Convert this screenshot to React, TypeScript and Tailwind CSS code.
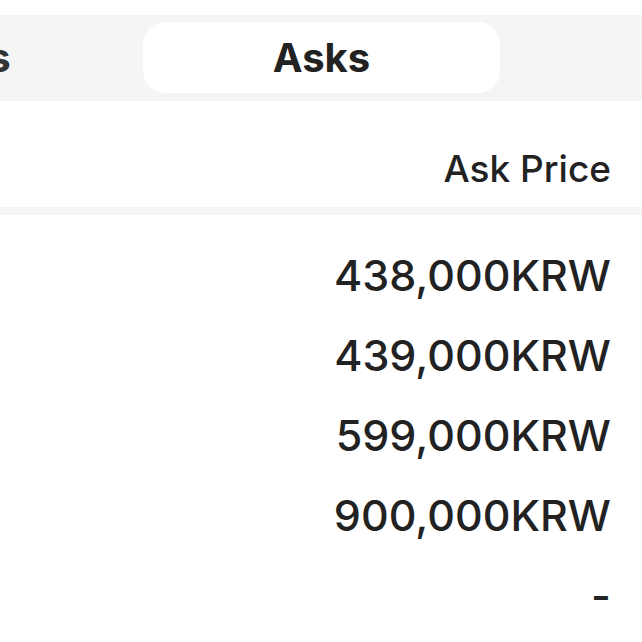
const tabs = ["Sales", "Asks", "Bids"];
const prices = ["438,000KRW", "439,000KRW", "599,000KRW", "900,000KRW", "-"];

export default function App() {
  return (
    <div className="h-[642px] w-[642px] overflow-hidden bg-white font-['Inter','Liberation_Sans',sans-serif] text-[#222222]">
      <div className="h-[15px]" />
      {/* tab switcher */}
      <div className="h-[86px] overflow-hidden bg-[#f5f5f5]">
        <div className="ml-[-221px] flex gap-[7px] pt-[7px]">
          {tabs.map((t) => (
            <div
              key={t}
              className={
                t === "Asks"
                  ? "flex h-[71px] w-[357px] shrink-0 items-center justify-center rounded-[22px] bg-white text-[40px] font-bold leading-none"
                  : "flex h-[71px] w-[357px] shrink-0 items-center justify-center text-[40px] font-bold leading-none text-[#333333]"
              }
            >
              {t}
            </div>
          ))}
        </div>
      </div>

      <div className="flex h-[106px] justify-end pr-[31px] pt-[49px]">
        <span className="text-[37px] font-medium leading-none">Ask Price</span>
      </div>
      <div className="h-[8px] bg-[#f5f5f5]" />

      <div className="pt-[20px]">
        {prices.map((p, i) => (
          <div key={i} className="flex h-[80px] items-center justify-end pr-[31px]">
            <span className="text-[43px] font-medium leading-none">{p}</span>
          </div>
        ))}
      </div>
    </div>
  );
}
